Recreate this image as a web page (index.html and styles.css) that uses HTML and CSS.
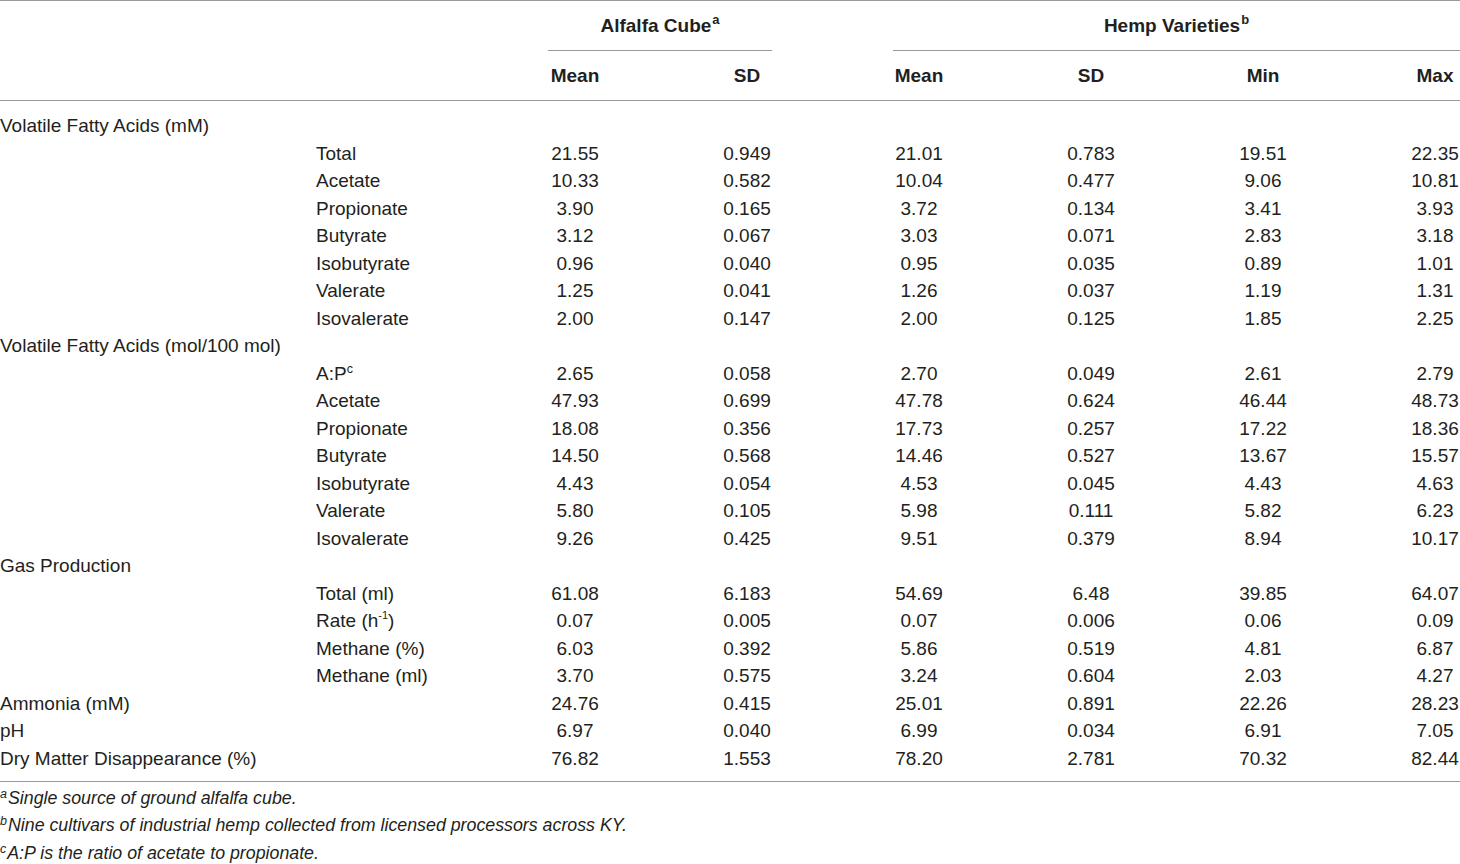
FILE: index.html
```html
<!DOCTYPE html>
<html lang="en">
<head>
<meta charset="utf-8">
<title>Table</title>
<link rel="stylesheet" href="styles.css">
</head>
<body>
<div class="table">
  <div class="head">
    <div class="hrow hrow1">
      <div class="group group-alf"><span class="gtitle">Alfalfa Cube<sup>a</sup></span></div>
      <div class="group group-hemp"><span class="gtitle">Hemp Varieties<sup>b</sup></span></div>
    </div>
    <div class="hrow hrow2">
      <div class="v ca">Mean</div>
      <div class="v cb">SD</div>
      <div class="v cc">Mean</div>
      <div class="v cd">SD</div>
      <div class="v ce">Min</div>
      <div class="v cf">Max</div>
    </div>
  </div>
  <div class="body">
    <div class="row"><div class="grp">Volatile Fatty Acids (mM)</div></div>
    <div class="row"><div class="sub">Total</div><div class="v ca">21.55</div><div class="v cb">0.949</div><div class="v cc">21.01</div><div class="v cd">0.783</div><div class="v ce">19.51</div><div class="v cf">22.35</div></div>
    <div class="row"><div class="sub">Acetate</div><div class="v ca">10.33</div><div class="v cb">0.582</div><div class="v cc">10.04</div><div class="v cd">0.477</div><div class="v ce">9.06</div><div class="v cf">10.81</div></div>
    <div class="row"><div class="sub">Propionate</div><div class="v ca">3.90</div><div class="v cb">0.165</div><div class="v cc">3.72</div><div class="v cd">0.134</div><div class="v ce">3.41</div><div class="v cf">3.93</div></div>
    <div class="row"><div class="sub">Butyrate</div><div class="v ca">3.12</div><div class="v cb">0.067</div><div class="v cc">3.03</div><div class="v cd">0.071</div><div class="v ce">2.83</div><div class="v cf">3.18</div></div>
    <div class="row"><div class="sub">Isobutyrate</div><div class="v ca">0.96</div><div class="v cb">0.040</div><div class="v cc">0.95</div><div class="v cd">0.035</div><div class="v ce">0.89</div><div class="v cf">1.01</div></div>
    <div class="row"><div class="sub">Valerate</div><div class="v ca">1.25</div><div class="v cb">0.041</div><div class="v cc">1.26</div><div class="v cd">0.037</div><div class="v ce">1.19</div><div class="v cf">1.31</div></div>
    <div class="row"><div class="sub">Isovalerate</div><div class="v ca">2.00</div><div class="v cb">0.147</div><div class="v cc">2.00</div><div class="v cd">0.125</div><div class="v ce">1.85</div><div class="v cf">2.25</div></div>
    <div class="row"><div class="grp">Volatile Fatty Acids (mol/100 mol)</div></div>
    <div class="row"><div class="sub">A:P<sup>c</sup></div><div class="v ca">2.65</div><div class="v cb">0.058</div><div class="v cc">2.70</div><div class="v cd">0.049</div><div class="v ce">2.61</div><div class="v cf">2.79</div></div>
    <div class="row"><div class="sub">Acetate</div><div class="v ca">47.93</div><div class="v cb">0.699</div><div class="v cc">47.78</div><div class="v cd">0.624</div><div class="v ce">46.44</div><div class="v cf">48.73</div></div>
    <div class="row"><div class="sub">Propionate</div><div class="v ca">18.08</div><div class="v cb">0.356</div><div class="v cc">17.73</div><div class="v cd">0.257</div><div class="v ce">17.22</div><div class="v cf">18.36</div></div>
    <div class="row"><div class="sub">Butyrate</div><div class="v ca">14.50</div><div class="v cb">0.568</div><div class="v cc">14.46</div><div class="v cd">0.527</div><div class="v ce">13.67</div><div class="v cf">15.57</div></div>
    <div class="row"><div class="sub">Isobutyrate</div><div class="v ca">4.43</div><div class="v cb">0.054</div><div class="v cc">4.53</div><div class="v cd">0.045</div><div class="v ce">4.43</div><div class="v cf">4.63</div></div>
    <div class="row"><div class="sub">Valerate</div><div class="v ca">5.80</div><div class="v cb">0.105</div><div class="v cc">5.98</div><div class="v cd">0.111</div><div class="v ce">5.82</div><div class="v cf">6.23</div></div>
    <div class="row"><div class="sub">Isovalerate</div><div class="v ca">9.26</div><div class="v cb">0.425</div><div class="v cc">9.51</div><div class="v cd">0.379</div><div class="v ce">8.94</div><div class="v cf">10.17</div></div>
    <div class="row"><div class="grp">Gas Production</div></div>
    <div class="row"><div class="sub">Total (ml)</div><div class="v ca">61.08</div><div class="v cb">6.183</div><div class="v cc">54.69</div><div class="v cd">6.48</div><div class="v ce">39.85</div><div class="v cf">64.07</div></div>
    <div class="row"><div class="sub">Rate (h<sup class="neg">-1</sup>)</div><div class="v ca">0.07</div><div class="v cb">0.005</div><div class="v cc">0.07</div><div class="v cd">0.006</div><div class="v ce">0.06</div><div class="v cf">0.09</div></div>
    <div class="row"><div class="sub">Methane (%)</div><div class="v ca">6.03</div><div class="v cb">0.392</div><div class="v cc">5.86</div><div class="v cd">0.519</div><div class="v ce">4.81</div><div class="v cf">6.87</div></div>
    <div class="row"><div class="sub">Methane (ml)</div><div class="v ca">3.70</div><div class="v cb">0.575</div><div class="v cc">3.24</div><div class="v cd">0.604</div><div class="v ce">2.03</div><div class="v cf">4.27</div></div>
    <div class="row"><div class="grp">Ammonia (mM)</div><div class="v ca">24.76</div><div class="v cb">0.415</div><div class="v cc">25.01</div><div class="v cd">0.891</div><div class="v ce">22.26</div><div class="v cf">28.23</div></div>
    <div class="row"><div class="grp">pH</div><div class="v ca">6.97</div><div class="v cb">0.040</div><div class="v cc">6.99</div><div class="v cd">0.034</div><div class="v ce">6.91</div><div class="v cf">7.05</div></div>
    <div class="row"><div class="grp">Dry Matter Disappearance (%)</div><div class="v ca">76.82</div><div class="v cb">1.553</div><div class="v cc">78.20</div><div class="v cd">2.781</div><div class="v ce">70.32</div><div class="v cf">82.44</div></div>
  </div>
  <div class="notes">
    <p class="note"><sup>a</sup>Single source of ground alfalfa cube.</p>
    <p class="note"><sup>b</sup>Nine cultivars of industrial hemp collected from licensed processors across KY.</p>
    <p class="note"><sup>c</sup>A:P is the ratio of acetate to propionate.</p>
  </div>
</div>
</body>
</html>
```

FILE: styles.css
```css
html, body {
  margin: 0;
  padding: 0;
  background: #ffffff;
}
body {
  font-family: "Liberation Sans", Arial, Helvetica, sans-serif;
  color: #231f20;
  font-size: 19px;
  overflow: hidden;
}
.table {
  width: 1460px;
}
.hrow, .row {
  display: grid;
  grid-template-columns: 316px 173px repeat(5, 172px) 1fr;
  align-items: center;
}
.head {
  border-top: 1px solid #9a9a9a;
  border-bottom: 1px solid #9a9a9a;
  font-weight: bold;
}
.hrow1 {
  height: 50px;
  align-items: stretch;
}
.hrow2 {
  height: 49px;
}
.group {
  display: flex;
  align-items: center;
  justify-content: center;
  border-bottom: 1px solid #9a9a9a;
  padding-top: 1px;
}
.gtitle {
  white-space: nowrap;
}
.group-alf {
  grid-column: 3 / 5;
  margin: 0 61px 0 59px;
}
.group-hemp {
  grid-column: 5 / 9;
  margin-left: 60px;
}
.body {
  padding: 11px 0 9px;
  border-bottom: 1px solid #9a9a9a;
}
.row {
  height: 27.5px;
  line-height: 27.5px;
}
.grp {
  grid-column: 1 / 3;
  white-space: nowrap;
}
.sub {
  grid-column: 2 / 3;
  white-space: nowrap;
}
.v {
  justify-self: center;
  text-align: center;
  white-space: nowrap;
}
.ca { grid-column: 3; }
.cb { grid-column: 4; }
.cc { grid-column: 5; }
.cd { grid-column: 6; }
.ce { grid-column: 7; }
.cf {
  grid-column: 8;
  justify-self: end;
  width: 50px;
}
sup {
  font-size: 12.5px;
  line-height: 0;
  vertical-align: 7px;
  font-weight: normal;
}
.head sup {
  font-weight: bold;
  font-size: 13px;
  vertical-align: 8px;
  margin-left: 1px;
}
.sub sup.neg {
  font-size: 11px;
  vertical-align: 8px;
}
.notes {
  padding-top: 2.5px;
}
.note {
  margin: 0;
  font-style: italic;
  font-size: 17.8px;
  line-height: 27.5px;
  padding-left: 0;
  white-space: nowrap;
}
.note sup {
  font-size: 12.5px;
  vertical-align: 6px;
  margin-right: 1px;
}
```
